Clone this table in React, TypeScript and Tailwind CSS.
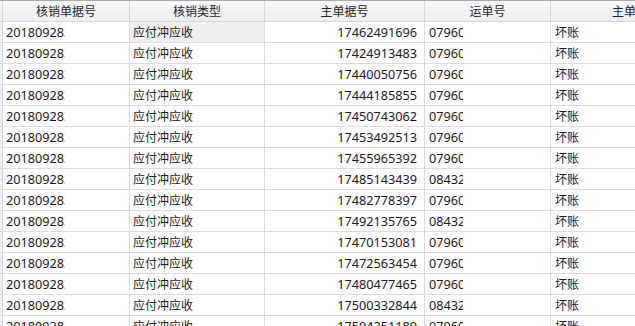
import React from "react";

const main = [
  "17462491696","17424913483","17440050756","17444185855","17450743062","17453492513","17455965392",
  "17485143439","17482778397","17492135765","17470153081","17472563454","17480477465","17500332844","17504251189",
];
const way = ["07960","07960","07960","07960","07960","07960","07960","08432","07960","08432","07960","07960","07960","08432","07960"];

export default function App() {
  return (
    <div
      className="w-[635px] h-[326px] overflow-hidden bg-white text-[12px] text-[#1a1a1a]"
      style={{ fontFamily: "'Noto Sans', 'Noto Sans CJK SC', sans-serif" }}
    >
      <div className="flex h-[22px] border-t border-b border-t-[#a9a9ad] border-b-[#d6d6da] bg-gradient-to-b from-[#f7f7f9] to-[#eeeef1] text-[#262626] whitespace-nowrap">
        <div className="w-[3px] shrink-0 border-r border-[#d6d6da]" />
        <div className="w-[127px] shrink-0 border-r border-[#d6d6da] flex items-center justify-center pt-[1px]">核销单据号</div>
        <div className="w-[135px] shrink-0 border-r border-[#d6d6da] flex items-center justify-center pt-[1px]">核销类型</div>
        <div className="w-[160px] shrink-0 border-r border-[#d6d6da] flex items-center justify-center pt-[1px]">主单据号</div>
        <div className="w-[126px] shrink-0 border-r border-[#d6d6da] flex items-center justify-center pt-[1px]">运单号</div>
        <div className="w-[120px] shrink-0 flex items-center justify-center pl-[50px] pt-[1px]">主单据号</div>
      </div>
      {main.map((m, i) => (
        <div key={i} className="flex h-[21px] border-b border-[#dcdce0] whitespace-nowrap">
          <div className="w-[3px] shrink-0 border-r border-[#d6d6da] bg-[#f0f0f2]" />
          <div className="w-[127px] shrink-0 border-r border-[#dcdce0] flex items-center pl-[3px] pt-[2px]">
            <div className="w-[59px] overflow-hidden text-[12.7px]">201809283234</div>
          </div>
          <div className={`w-[135px] shrink-0 border-r border-[#dcdce0] flex items-center pl-[3px] pt-[2px] ${i === 0 ? "bg-[#efeff1]" : ""}`}>
            应付冲应收
          </div>
          <div className="w-[160px] shrink-0 border-r border-[#dcdce0] flex items-center justify-end pr-[7px] pt-[2px]">
            <div className="w-[80px] overflow-hidden flex justify-end text-[12.7px]">
              <span>3{m}</span>
            </div>
          </div>
          <div className="w-[126px] shrink-0 border-r border-[#dcdce0] flex items-center pl-[4px] pt-[2px]">
            <div className="w-[34px] overflow-hidden text-[12.7px]">{way[i]}12</div>
          </div>
          <div className="w-[84px] shrink-0 flex items-center pl-[4px] pt-[2px]">坏账</div>
        </div>
      ))}
    </div>
  );
}
